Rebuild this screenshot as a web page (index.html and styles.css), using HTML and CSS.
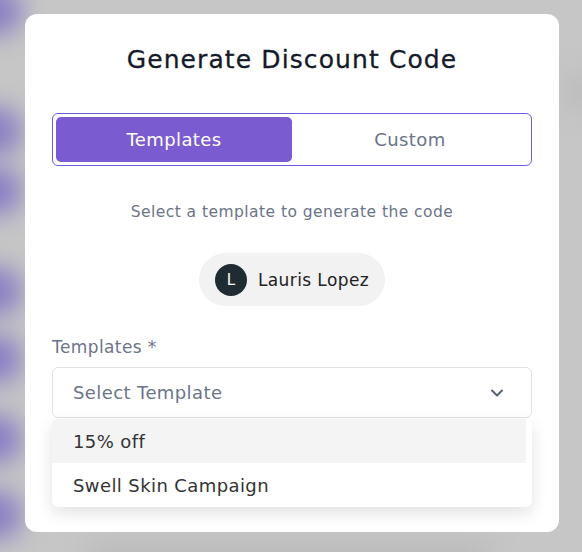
FILE: index.html
```html
<!DOCTYPE html>
<html lang="en">
<head>
    <meta charset="UTF-8">
    <meta name="viewport" content="width=device-width, initial-scale=1.0">
    <title>Generate Discount Code</title>
    <link rel="stylesheet" href="styles.css">
</head>
<body>
    <!-- blurred app behind the modal -->
    <div class="backdrop">
        <span class="blob" style="top: -14px;"></span>
        <span class="blob" style="top: 106px;"></span>
        <span class="blob" style="top: 166px;"></span>
        <span class="blob" style="top: 266px;"></span>
        <span class="blob" style="top: 334px;"></span>
        <span class="blob" style="top: 414px;"></span>
        <span class="blob" style="top: 490px;"></span>
        <span class="shade shade-right"></span>
        <span class="shade shade-bottom"></span>
    </div>

    <div class="modal">
        <h1>Generate Discount Code</h1>

        <div class="tabs">
            <button class="tab active">Templates</button>
            <button class="tab">Custom</button>
        </div>

        <p class="hint">Select a template to generate the code</p>

        <div class="chip-row">
            <div class="chip">
                <span class="avatar">L</span>
                <span class="chip-name">Lauris Lopez</span>
            </div>
        </div>

        <label class="field-label">Templates *</label>
        <div class="select-wrap">
            <div class="select">
                <span>Select Template</span>
                <svg class="chevron" width="16" height="16" viewBox="0 0 16 16" fill="none">
                    <path d="M3 5.5l5 5 5-5" stroke="#556070" stroke-width="2" stroke-linecap="round" stroke-linejoin="round"/>
                </svg>
            </div>
            <ul class="menu">
                <li class="menu-item hover">15% off</li>
                <li class="menu-item">Swell Skin Campaign</li>
            </ul>
        </div>
    </div>
</body>
</html>
```

FILE: styles.css
```css
:root {
    --purple: #7a5bd0;
    --purple-line: #6d5ce0;
    --text-dark: #141a2a;
    --text-muted: #6b7488;
    --border: #e2e2e2;
}

* {
    box-sizing: border-box;
}

body {
    margin: 0;
    width: 582px;
    height: 552px;
    overflow: hidden;
    background: #c6c6c6;
    font-family: 'DejaVu Sans', sans-serif;
    position: relative;
}

.backdrop {
    position: absolute;
    inset: 0;
    overflow: hidden;
}

.blob {
    position: absolute;
    left: -28px;
    width: 50px;
    height: 50px;
    border-radius: 50%;
    background: #8a7ec4;
    filter: blur(12px);
}

.shade {
    position: absolute;
    background: #b6b6b6;
    filter: blur(14px);
}

.shade-right {
    right: -10px;
    top: 78px;
    width: 24px;
    height: 28px;
}

.shade-bottom {
    left: 90px;
    bottom: -16px;
    width: 400px;
    height: 22px;
}

.modal {
    position: relative;
    margin: 14px 0 0 25px;
    width: 534px;
    height: 518px;
    background: #fff;
    border-radius: 12px;
    padding: 30px 27px 0;
}

h1 {
    margin: 0;
    font-size: 25px;
    line-height: 32px;
    font-weight: 500;
    letter-spacing: 1.1px;
    text-align: center;
    color: var(--text-dark);
    -webkit-text-stroke: 0.3px var(--text-dark);
}

.tabs {
    margin-top: 37px;
    display: flex;
    padding: 3px;
    height: 53px;
    border: 1px solid var(--purple-line);
    border-radius: 6px;
}

.tab {
    flex: 1;
    border: none;
    background: transparent;
    font-family: inherit;
    font-size: 18px;
    letter-spacing: 0.4px;
    color: var(--text-muted);
    border-radius: 5px;
    cursor: pointer;
}

.tab.active {
    background: var(--purple);
    color: #fff;
}

.hint {
    margin: 35px 0 0;
    text-align: center;
    font-size: 15.5px;
    line-height: 22px;
    letter-spacing: 0.45px;
    color: var(--text-muted);
}

.chip-row {
    margin-top: 30px;
    display: flex;
    justify-content: center;
}

.chip {
    display: flex;
    align-items: center;
    gap: 11px;
    height: 53px;
    padding: 0 16px;
    border-radius: 27px;
    background: #f2f2f2;
}

.avatar {
    width: 32px;
    height: 32px;
    border-radius: 50%;
    background: #1f2d33;
    color: #fff;
    font-size: 15px;
    display: flex;
    align-items: center;
    justify-content: center;
}

.chip-name {
    font-size: 17px;
    letter-spacing: 0.4px;
    color: #222;
}

.field-label {
    display: block;
    margin-top: 29px;
    font-size: 17px;
    line-height: 24px;
    letter-spacing: 0.4px;
    color: var(--text-muted);
}

.select-wrap {
    position: relative;
    margin-top: 8px;
}

.select {
    height: 51px;
    display: flex;
    align-items: center;
    justify-content: space-between;
    padding: 0 26px 0 20px;
    border: 1px solid var(--border);
    border-radius: 6px;
    font-size: 18px;
    letter-spacing: 0.4px;
    color: var(--text-muted);
}

.menu {
    position: absolute;
    top: 52px;
    left: 0;
    right: 0;
    margin: 0;
    padding: 0 6px 0 0;
    list-style: none;
    background: #fff;
    border-radius: 6px;
    box-shadow: 0 6px 16px rgba(0, 0, 0, 0.12);
}

.menu-item {
    height: 44px;
    display: flex;
    align-items: center;
    padding-left: 21px;
    font-size: 18px;
    letter-spacing: 0.4px;
    color: #333;
}

.menu-item.hover {
    background: #f4f4f4;
    border-top-left-radius: 6px;
}
```
